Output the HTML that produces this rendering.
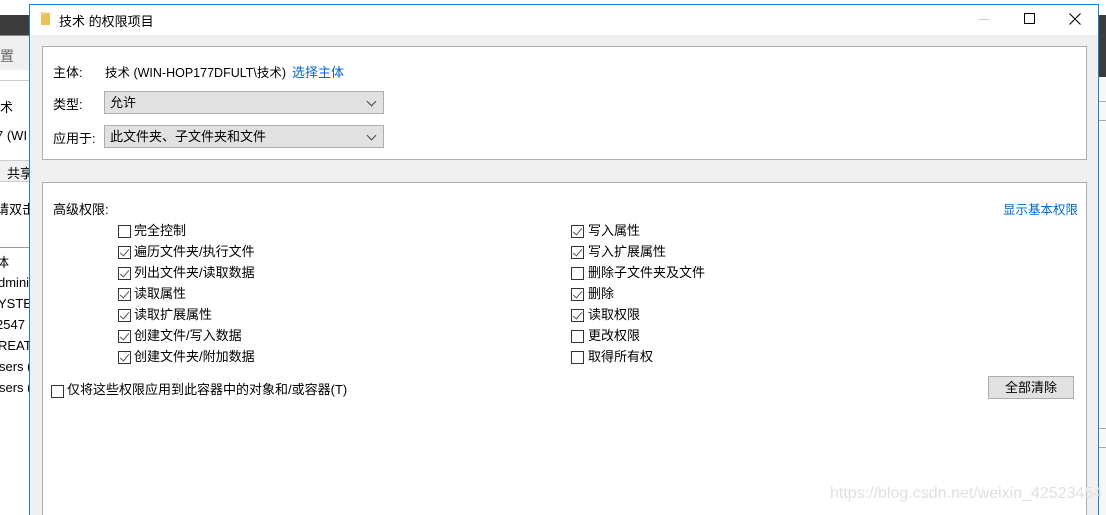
<!DOCTYPE html>
<html><head><meta charset="utf-8"><style>
*{margin:0;padding:0;box-sizing:border-box}
html,body{width:1106px;height:515px;overflow:hidden}
body{position:relative;background:#fff;font-family:"Liberation Sans","Noto Sans CJK SC","Microsoft YaHei",sans-serif;font-size:13px;color:#000}
.a{position:absolute;white-space:nowrap}
.cb{position:absolute;width:13px;height:13px;border:1px solid #333;background:#fff}
.cb.c::after{content:"";position:absolute;left:3px;top:0px;width:4px;height:8px;border:solid #555;border-width:0 1.5px 1.5px 0;transform:rotate(40deg)}
.lbl{position:absolute;white-space:nowrap;line-height:16px}
.sel{position:absolute;background:#e1e1e1;border:1px solid #adadad;height:23px;line-height:21px;padding-left:5px}
.sel::after{content:"";position:absolute;right:8px;top:6px;width:6px;height:6px;border:solid #444;border-width:0 1px 1px 0;transform:rotate(45deg)}
</style></head><body>
<div class="a" style="left:0;top:15px;width:29px;height:21px;background:#3c3c3c"></div>
<div class="a" style="left:0;top:35px;width:29px;height:1px;background:#888"></div>
<div class="a" style="left:0;top:36px;width:29px;height:34px;background:#f0f0f0"></div>
<div class="a" style="left:0;top:46px;color:#666;font-size:14px">置</div>
<div class="a" style="left:0;top:80px;width:29px;height:1px;background:#ccc"></div>
<div class="a" style="left:0;top:97px">术</div>
<div class="a" style="left:-4px;top:128px">7 (WI</div>
<div class="a" style="left:0;top:160px;width:29px;height:22px;background:#f0f0f0;border-top:1px solid #ccc;border-bottom:1px solid #ccc"></div>
<div class="a" style="left:7px;top:163px">共享</div>
<div class="a" style="left:-4px;top:199px">请双击</div>
<div class="a" style="left:0;top:247px;width:29px;height:1px;background:#999"></div>
<div class="a" style="left:-4px;top:252px">体</div>
<div class="a" style="left:-2px;top:275px">dminis</div>
<div class="a" style="left:-2px;top:296px">YSTEM</div>
<div class="a" style="left:-4px;top:317px">2547 (</div>
<div class="a" style="left:-2px;top:338px">REATO</div>
<div class="a" style="left:-1px;top:359px">sers (</div>
<div class="a" style="left:-1px;top:380px">sers (</div>
<div class="a" style="left:1099px;top:15px;width:7px;height:62px;background:#3c3c3c"></div>
<div class="a" style="left:1099px;top:77px;width:7px;height:438px;background:#f7f7f7"></div>
<div class="a" style="left:1099px;top:101px;width:7px;height:20px;border-top:1px solid #aaa;border-bottom:1px solid #aaa"></div>
<div class="a" style="left:1099px;top:428px;width:7px;height:20px;border-top:1px solid #aaa;border-bottom:1px solid #aaa"></div>
<div class="a" style="left:29px;top:4px;width:1070px;height:511px;border:1px solid #1883d7;border-bottom:none;background:#f0f0f0"></div>
<div class="a" style="left:30px;top:5px;width:1068px;height:30px;background:#fff"></div>
<svg class="a" style="left:41px;top:12px" width="10" height="13"><rect x="0" y="1" width="9" height="12" fill="#e8c15a"/><rect x="0" y="0" width="4" height="3" fill="#f3d27a"/></svg>
<div class="a" style="left:59px;top:11px">技术 的权限项目</div>
<div class="a" style="left:979px;top:19px;width:10px;height:1px;background:#ccc"></div>
<div class="a" style="left:1024px;top:13px;width:11px;height:11px;border:1px solid #000"></div>
<svg class="a" style="left:1069px;top:13px" width="12" height="12"><path d="M0.5 0.5L11.5 11.5M11.5 0.5L0.5 11.5" stroke="#000" stroke-width="1.1"/></svg>
<div class="a" style="left:42px;top:46px;width:1045px;height:114px;background:#fff;border:1px solid #adadad"></div>
<div class="a" style="left:53px;top:62px">主体:</div>
<div class="a" style="left:105px;top:62px;font-size:12.5px">技术 (WIN-HOP177DFULT\技术)</div>
<div class="a" style="left:292px;top:62px;color:#0066cc">选择主体</div>
<div class="a" style="left:53px;top:94px">类型:</div>
<div class="sel" style="left:104px;top:91px;width:280px">允许</div>
<div class="a" style="left:53px;top:128px">应用于:</div>
<div class="sel" style="left:104px;top:125px;width:280px">此文件夹、子文件夹和文件</div>
<div class="a" style="left:42px;top:182px;width:1045px;height:333px;background:#fff;border:1px solid #adadad;border-bottom:none"></div>
<div class="a" style="left:53px;top:199px">高级权限:</div>
<div class="a" style="left:1003px;top:199px;color:#0066cc;font-size:12.5px">显示基本权限</div>

<div class="cb" style="left:118px;top:225px"></div><div class="lbl" style="left:134px;top:223px">完全控制</div>
<div class="cb c" style="left:118px;top:246px"></div><div class="lbl" style="left:134px;top:244px">遍历文件夹/执行文件</div>
<div class="cb c" style="left:118px;top:267px"></div><div class="lbl" style="left:134px;top:265px">列出文件夹/读取数据</div>
<div class="cb c" style="left:118px;top:288px"></div><div class="lbl" style="left:134px;top:286px">读取属性</div>
<div class="cb c" style="left:118px;top:309px"></div><div class="lbl" style="left:134px;top:307px">读取扩展属性</div>
<div class="cb c" style="left:118px;top:330px"></div><div class="lbl" style="left:134px;top:328px">创建文件/写入数据</div>
<div class="cb c" style="left:118px;top:351px"></div><div class="lbl" style="left:134px;top:349px">创建文件夹/附加数据</div>

<div class="cb c" style="left:571px;top:225px"></div><div class="lbl" style="left:588px;top:223px">写入属性</div>
<div class="cb c" style="left:571px;top:246px"></div><div class="lbl" style="left:588px;top:244px">写入扩展属性</div>
<div class="cb" style="left:571px;top:267px"></div><div class="lbl" style="left:588px;top:265px">删除子文件夹及文件</div>
<div class="cb c" style="left:571px;top:288px"></div><div class="lbl" style="left:588px;top:286px">删除</div>
<div class="cb c" style="left:571px;top:309px"></div><div class="lbl" style="left:588px;top:307px">读取权限</div>
<div class="cb" style="left:571px;top:330px"></div><div class="lbl" style="left:588px;top:328px">更改权限</div>
<div class="cb" style="left:571px;top:351px"></div><div class="lbl" style="left:588px;top:349px">取得所有权</div>

<div class="cb" style="left:51px;top:385px"></div><div class="lbl" style="left:67px;top:382px">仅将这些权限应用到此容器中的对象和/或容器(T)</div>
<div class="a" style="left:988px;top:376px;width:86px;height:23px;background:#e1e1e1;border:1px solid #adadad;text-align:center;line-height:21px">全部清除</div>
<div class="a" style="left:830px;top:485px;color:#e0e0e0;font-size:16px">https://blog.csdn.net/weixin_42523454</div>
</body></html>
